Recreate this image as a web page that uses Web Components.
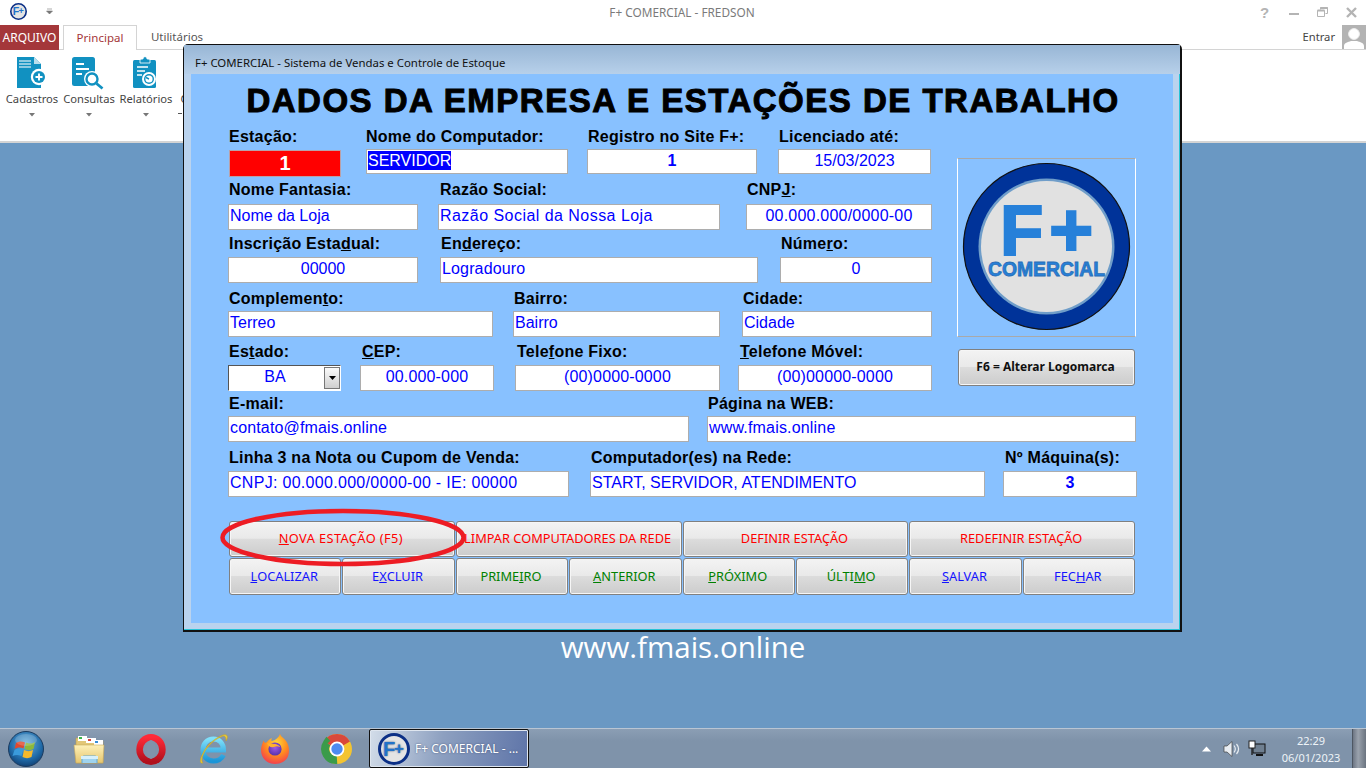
<!DOCTYPE html>
<html lang="pt-BR">
<head>
<meta charset="utf-8">
<title>F+ COMERCIAL</title>
<style>
  html, body { margin: 0; padding: 0; height: 100%; overflow: hidden; background: #6a98c3; }
</style>
</head>
<body>
<f-app>
  <f-titlebar slot="title">F+ COMERCIAL - FREDSON</f-titlebar>
  <f-ribbon slot="ribbon">
    <f-ribbon-btn icon="cadastros">Cadastros</f-ribbon-btn>
    <f-ribbon-btn icon="consultas">Consultas</f-ribbon-btn>
    <f-ribbon-btn icon="relatorios">Relatórios</f-ribbon-btn>
  </f-ribbon>
  <f-taskbar slot="taskbar"></f-taskbar>

  <f-window slot="window" caption="F+ COMERCIAL - Sistema de Vendas e Controle de Estoque">
    <f-heading>DADOS DA EMPRESA E ESTAÇÕES DE TRABALHO</f-heading>
    <f-upper>
      <f-row ly="2">
        <f-field w="112" kind="red" value="1" lx="1">Estação:</f-field>
        <f-field w="202" mx="26" up kind="selected" value="SERVIDOR">Nome do Computador:</f-field>
        <f-field w="170" mx="19" up center bold value="1" lx="1">Registro no Site F+:</f-field>
        <f-field w="153" mx="21" up center value="15/03/2023" lx="1">Licenciado até:</f-field>
      </f-row>
      <f-row mt="7" ly="0">
        <f-field w="190" value="Nome da Loja" lx="1">Nome Fantasia:</f-field>
        <f-field w="282" mx="20" ls=".46" value="Razão Social da Nossa Loja" lx="2">Razão Social:</f-field>
        <f-field w="186" mx="26" ls=".22" center value="00.000.000/0000-00" lx="1">CNP<u>J</u>:</f-field>
      </f-row>
      <f-row mt="5">
        <f-field w="190" center value="00000" lx="1">Inscrição Esta<u>d</u>ual:</f-field>
        <f-field w="318" mx="22" ls=".15" value="Logradouro" lx="1">En<u>d</u>ereço:</f-field>
        <f-field w="152" mx="22" center value="0" lx="1">Núme<u>r</u>o:</f-field>
      </f-row>
      <f-row mt="6" ly="2">
        <f-field w="265" value="Terreo" lx="1">Complemen<u>t</u>o:</f-field>
        <f-field w="207" mx="20" value="Bairro" lx="1">Bairro:</f-field>
        <f-field w="190" mx="22" value="Cidade" lx="1">Cidade:</f-field>
      </f-row>
      <f-row mt="6">
        <f-field w="113" kind="select" value="BA" lx="1">Es<u>t</u>ado:</f-field>
        <f-field w="134" mx="19" ls=".15" center value="00.000-000" lx="2"><u>C</u>EP:</f-field>
        <f-field w="205" mx="21" ls=".15" center value="(00)0000-0000" lx="2">Tele<u>f</u>one Fixo:</f-field>
        <f-field w="194" mx="18" ls=".15" center value="(00)00000-0000" lx="2"><u>T</u>elefone Móvel:</f-field>
      </f-row>
      <f-logo-box slot="side"></f-logo-box>
      <f-btn slot="side" tone="dark" strong>F6 = Alterar Logomarca</f-btn>
    </f-upper>
    <f-row mt="3" ly="2">
      <f-field w="461" ls=".15" value="contato@fmais.online" lx="1">E-mail:</f-field>
      <f-field w="429" mx="18" ls=".18" value="www.fmais.online" lx="1">Página na WEB:</f-field>
    </f-row>
    <f-row mt="7">
      <f-field w="341" ls=".3" value="CNPJ: 00.000.000/0000-00 - IE: 00000" lx="1">Linha 3 na Nota ou Cupom de Venda:</f-field>
      <f-field w="395" mx="21" value="START, SERVIDOR, ATENDIMENTO" lx="1">Computador(es) na Rede:</f-field>
      <f-field w="134" mx="18" center bold value="3" lx="2">Nº Máquina(s):</f-field>
    </f-row>
    <f-actions>
      <f-btn span="2" tone="red" style="letter-spacing:.4px"><u>N</u>OVA ESTAÇÃO (F5)</f-btn>
      <f-btn span="2" tone="red">LIMPAR COMPUTADORES DA REDE</f-btn>
      <f-btn span="2" tone="red">DEFINIR ESTAÇÃO</f-btn>
      <f-btn span="2" tone="red">REDEFINIR ESTAÇÃO</f-btn>
      <f-btn tone="blue"><u>L</u>OCALIZAR</f-btn>
      <f-btn tone="blue">E<u>X</u>CLUIR</f-btn>
      <f-btn tone="green">PRIME<u>I</u>RO</f-btn>
      <f-btn tone="green"><u>A</u>NTERIOR</f-btn>
      <f-btn tone="green"><u>P</u>RÓXIMO</f-btn>
      <f-btn tone="green">ÚLTI<u>M</u>O</f-btn>
      <f-btn tone="blue"><u>S</u>ALVAR</f-btn>
      <f-btn tone="blue">FEC<u>H</u>AR</f-btn>
      <f-mark></f-mark>
    </f-actions>
  </f-window>
</f-app>

<script>
  const FPLUS_MINI = (size) => `
    <svg width="${size}" height="${size}" viewBox="0 0 32 32">
      <circle cx="16" cy="16" r="14.5" fill="#e4e4e4" stroke="#0b2f86" stroke-width="3"/>
      <text font-family="Liberation Sans, sans-serif" font-weight="700" fill="#2272c9"><tspan x="5" y="22.5" font-size="20">F</tspan><tspan x="16" y="21" font-size="17">+</tspan></text>
    </svg>`;

  class FApp extends HTMLElement {
    constructor() {
      super();
      this.attachShadow({ mode: 'open' }).innerHTML = `
        <style>
          :host { display: flex; flex-direction: column; width: 1366px; height: 768px; position: relative; overflow: hidden;
                  font-family: "Liberation Sans", Arial, sans-serif; }
          .desk { flex: 1; background: #6a98c3; display: flex; justify-content: center; padding-top: 486px; box-sizing: border-box; }
          .site { color: #fff; font: 400 29.5px/36px "Open Sans", sans-serif; height: 36px; }
        </style>
        <slot name="title"></slot>
        <slot name="ribbon"></slot>
        <div class="desk"><span class="site">www.fmais.online</span></div>
        <slot name="taskbar"></slot>
        <slot name="window"></slot>`;
    }
  }
  customElements.define('f-app', FApp);

  class FTitlebar extends HTMLElement {
    constructor() {
      super();
      this.attachShadow({ mode: 'open' }).innerHTML = `
        <style>
          :host { display: flex; align-items: center; height: 25px; background: #fff; color: #7a7a7a;
                  font: 11.8px/25px "Noto Sans", sans-serif; }
          .left { display: flex; align-items: center; padding-left: 10px; gap: 19px; width: 116px; box-sizing: border-box; margin-top: -2px; }
          .mid { flex: 1; text-align: center; padding-right: 2px; margin-top: -1px; }
          .caret { width: 7px; height: 7px; }
          .right { display: flex; width: 116px; color: #b4b4b4; }
          .right span { width: 29px; display: flex; justify-content: center; align-items: center; height: 22px; }
          .q { font: 700 15px "Liberation Sans", sans-serif; }
        </style>
        <div class="left">${FPLUS_MINI(17)}
          <svg class="caret" viewBox="0 0 7 7"><path d="M1 1h5M0.5 3h6L3.5 6z" fill="#777" stroke="#777" stroke-width=".6"/></svg>
        </div>
        <div class="mid"><slot></slot></div>
        <div class="right">
          <span class="q">?</span>
          <span><svg width="10" height="10"><rect x="0" y="5" width="10" height="2" fill="#b4b4b4"/></svg></span>
          <span><svg width="11" height="11" fill="none" stroke="#b4b4b4"><path d="M3.5 2.5V.5h7v6h-2M.5 3.5h7v6h-7z"/><path d="M.5 3.5h7M3.5 1h7" stroke-width="2"/></svg></span>
          <span><svg width="11" height="11" stroke="#b4b4b4" stroke-width="2.4"><path d="M1 1l9 9M10 1l-9 9"/></svg></span>
        </div>`;
    }
  }
  customElements.define('f-titlebar', FTitlebar);

  class FRibbon extends HTMLElement {
    constructor() {
      super();
      this.attachShadow({ mode: 'open' }).innerHTML = `
        <style>
          :host { display: block; height: 118px; background: #fff; box-sizing: border-box; border-bottom: 2px solid #d4d4d4;
                  font: 11.5px "Noto Sans", sans-serif; color: #444; }
          .tabs { display: flex; height: 25px; box-sizing: border-box; border-bottom: 1px solid #d4d4d4; align-items: stretch; }
          .file { width: 59px; background: #a4373a; color: #fff; text-align: center; line-height: 25px; margin-bottom: -1px; font-size: 12px; }
          .tab { line-height: 24px; text-align: center; }
          .on { width: 72px; margin-left: 4px; color: #a4373a; background: #fff; border: 1px solid #d4d4d4; border-bottom: 0; margin-bottom: -1px; }
          .off { width: 78px; margin-left: 1px; color: #555; }
          .sp { flex: 1; }
          .who { line-height: 24px; margin-right: 7px; color: #444; font-size: 11.2px; }
          .ava { width: 24px; height: 24px; background: #b3b3b3; }
          .body { display: flex; padding-left: 3.5px; }
          .clip { font: 11.2px "Noto Sans", sans-serif; padding: 41px 0 0 6px; }
          .dash { width: 4px; height: 1px; background: #555; margin: 7px 0 0 -3px; }
        </style>
        <div class="tabs">
          <div class="file">ARQUIVO</div>
          <div class="tab on">Principal</div>
          <div class="tab off">Utilitários</div>
          <div class="sp"></div>
          <div class="who">Entrar</div>
          <svg class="ava" viewBox="0 0 24 24"><rect width="24" height="24" fill="#b3b3b3"/><circle cx="12" cy="9" r="5.4" fill="#fff" stroke="#eee"/><path d="M2 24v-3c0-3 4-4 7-5h6c3 1 7 2 7 5v3z" fill="#fff"/></svg>
        </div>
        <div class="body"><slot></slot><div class="clip">C<div class="dash"></div></div></div>`;
    }
  }
  customElements.define('f-ribbon', FRibbon);

  const RIBBON_ICONS = {
    cadastros: `<path d="M2 3h17l7 7v24H2z" fill="#1191c1"/><path d="M19 3l7 7h-7z" fill="#b9deec"/>
      <path d="M4 7h12M4 10h12M4 13h12" stroke="#b9deec" stroke-width="1.4"/>
      <circle cx="24" cy="23" r="8.2" fill="#fff"/><circle cx="24" cy="23" r="6" fill="#1191c1"/>
      <path d="M20.5 23h7M24 19.5v7" stroke="#fff" stroke-width="1.9"/>`,
    consultas: `<rect x="0" y="3" width="23" height="29" rx="2.5" fill="#1191c1"/>
      <path d="M4 10h8M4 15h13M4 20h6" stroke="#fff" stroke-width="2"/>
      <circle cx="20" cy="25" r="8" fill="#fff"/><circle cx="20" cy="25" r="5.5" fill="#fff" stroke="#1191c1" stroke-width="2.4"/>
      <path d="M24.5 29.5l6 5" stroke="#1191c1" stroke-width="2.8"/>`,
    relatorios: `<rect x="4" y="6" width="23" height="28" rx="1.5" fill="#1191c1"/>
      <path d="M11 6c0-1 2-1 3-1 0-3 4-3 4 0 1 0 3 0 3 1v3H11z" fill="#1191c1" stroke="#fff" stroke-width=".8"/>
      <path d="M8 13h11M8 17h8M8 21h5" stroke="#fff" stroke-width="1.5"/>
      <circle cx="20" cy="25" r="7" fill="#fff"/><circle cx="20" cy="25" r="5" fill="#1191c1"/><circle cx="20" cy="25" r="3.6" fill="#fff"/>
      <path d="M20 25l-3-1.5" stroke="#1191c1" stroke-width="1.4"/>`
  };

  class FRibbonBtn extends HTMLElement {
    connectedCallback() {
      if (this.shadowRoot) return;
      this.attachShadow({ mode: 'open' }).innerHTML = `
        <style>
          :host { display: flex; flex-direction: column; align-items: center; width: 57px; }
          svg.ic { width: 34px; height: 36px; margin-top: 4px; }
          .t { font: 11.2px/16px "Noto Sans", sans-serif; color: #444; margin-top: 1px; white-space: nowrap; }
          svg.c { width: 6px; height: 4px; margin-top: 6px; }
        </style>
        <svg class="ic" viewBox="0 0 34 36">${RIBBON_ICONS[this.getAttribute('icon')]}</svg>
        <div class="t"><slot></slot></div>
        <svg class="c" viewBox="0 0 6 4"><path d="M0 0h6L3 3.5z" fill="#777"/></svg>`;
    }
  }
  customElements.define('f-ribbon-btn', FRibbonBtn);

  class FWindow extends HTMLElement {
    connectedCallback() {
      if (this.shadowRoot) return;
      this.attachShadow({ mode: 'open' }).innerHTML = `
        <style>
          /* a window on the desktop, it floats over the ribbon */
          :host { position: absolute; left: 183px; top: 44px; width: 999px; height: 588px; box-sizing: border-box;
                  border: 1px solid #111; border-right-width: 2px; border-bottom-width: 2px; border-radius: 5px 5px 0 0;
                  display: flex; flex-direction: column; background: #bad3ee; box-shadow: inset -1px -1px 0 #27c3d6; }
          .cap { height: 29px; box-sizing: border-box; padding: 10px 0 0 11px; flex: none;
                 background: linear-gradient(#98b6d5, #b7d0ea); font: 11.4px/15px "Noto Sans", sans-serif; color: #111; }
          .client { margin: 0 7px 7px 7px; height: 549px; background: #88c1ff; padding-left: 37px; box-sizing: border-box; }
        </style>
        <div class="cap">${this.getAttribute('caption')}</div>
        <div class="client"><slot></slot></div>`;
    }
  }
  customElements.define('f-window', FWindow);

  class FHeading extends HTMLElement {
    constructor() {
      super();
      this.attachShadow({ mode: 'open' }).innerHTML = `
        <style>
          :host { display: block; height: 53px; margin-left: -35px; text-align: center; color: #000; white-space: nowrap;
                  font: 700 33px/53px "Liberation Sans", sans-serif; letter-spacing: 1.5px; -webkit-text-stroke: 1px #000; }
        </style>
        <slot></slot>`;
    }
  }
  customElements.define('f-heading', FHeading);

  class FUpper extends HTMLElement {
    constructor() {
      super();
      this.attachShadow({ mode: 'open' }).innerHTML = `
        <style>
          :host { display: flex; }
          .rows { width: 704px; }
          .side { margin-left: 25px; padding-top: 31px; display: flex; flex-direction: column; width: 179px; }
          ::slotted(f-btn) { margin: 12px 0 0 1px; width: 177px; height: 37px; }
        </style>
        <div class="rows"><slot></slot></div>
        <div class="side"><slot name="side"></slot></div>`;
    }
  }
  customElements.define('f-upper', FUpper);

  class FRow extends HTMLElement {
    connectedCallback() {
      if (this.shadowRoot) return;
      const ly = this.getAttribute('ly') || 1;
      this.attachShadow({ mode: 'open' }).innerHTML = `
        <style>:host { display: flex; margin-top: ${this.getAttribute('mt') || 0}px; --ly: ${ly}px; }</style>
        <slot></slot>`;
    }
  }
  customElements.define('f-row', FRow);

  class FField extends HTMLElement {
    connectedCallback() {
      if (this.shadowRoot) return;
      const kind = this.getAttribute('kind') || '';
      const value = this.getAttribute('value') || '';
      let inner = `<span class="v">${value}</span>`;
      if (kind === 'select') {
        inner = `<span class="v">${value}</span><span class="drop"><svg width="7" height="4"><path d="M0 0h7L3.5 4z" fill="#000"/></svg></span>`;
      }
      this.attachShadow({ mode: 'open' }).innerHTML = `
        <style>
          :host { display: block; width: ${this.getAttribute('w')}px; margin-left: ${this.getAttribute('mx') || 0}px; flex: none; }
          .lab { height: 22px; font: 700 16px/16px "Liberation Sans", sans-serif; color: #000; letter-spacing: .24px;
                 padding: var(--ly, 1px) 0 0 ${this.getAttribute('lx') || 0}px; white-space: nowrap; box-sizing: border-box; }
          .box { height: 26px; box-sizing: border-box; background: #fff; border: 1px solid #adadad; color: #0000ff;
                 font: 16px/22px "Liberation Sans", sans-serif; padding: 0 1px; white-space: nowrap; overflow: hidden;
                 letter-spacing: ${this.getAttribute('ls') || 0}px; }
          :host([center]) .box { text-align: center; }
          :host([bold]) .box { font-weight: 700; }
          :host([up]) .box { height: 25px; }
          .selected .v { background: #0000ff; color: #fff; display: inline-block; line-height: 19px; margin-top: 1px; }
          .red { background: #f00; border-color: #b9a0a8; color: #fff; font-weight: 700; font-size: 20px; text-align: center; height: 27px; margin: 1px -1px -2px 1px; line-height: 25px; }
          .select { position: relative; background: #fff; border: 1px solid #fff; border-top-color: #555; border-left-color: #555; padding-right: 20px; text-align: center; }
          /* the small arrow of the combo lies over the box */
          .drop { position: absolute; right: 0; top: 1px; width: 16px; height: 22px; box-sizing: border-box; border: 1px solid #777;
                  background: linear-gradient(#fafafa, #cfcfcf); display: flex; align-items: center; justify-content: center; }
        </style>
        <div class="lab"><slot></slot></div>
        <div class="box ${kind}">${inner}</div>`;
    }
  }
  customElements.define('f-field', FField);

  class FLogoBox extends HTMLElement {
    constructor() {
      super();
      this.attachShadow({ mode: 'open' }).innerHTML = `
        <style>
          :host { display: block; width: 179px; height: 179px; box-sizing: border-box; border: 1px solid; border-color: #a9a9a9 #fff #a9a9a9 #fff; }
          svg { display: block; }
        </style>
        <svg width="177" height="177" viewBox="0 0 177 177">
          <circle cx="88.5" cy="87.5" r="83" fill="#003399" stroke="#111" stroke-width="1.2"/>
          <circle cx="88.5" cy="87.5" r="68" fill="#6f9dc9"/>
          <circle cx="88.5" cy="87.5" r="65.5" fill="#e1e1e1"/>
          <text font-family="Liberation Sans, sans-serif" font-weight="700" fill="#2680d9" stroke="#2680d9" stroke-width="2">
            <tspan x="42" y="96" font-size="71">F</tspan><tspan x="91" y="96.5" font-size="76">+</tspan>
          </text>
          <text x="30" y="117" font-family="Liberation Sans, sans-serif" font-weight="700" font-size="20" textLength="117" lengthAdjust="spacingAndGlyphs" fill="#2680d9" stroke="#2a6fb8" stroke-width=".8">COMERCIAL</text>
        </svg>`;
    }
  }
  customElements.define('f-logo-box', FLogoBox);

  class FBtn extends HTMLElement {
    connectedCallback() {
      if (this.shadowRoot) return;
      const tones = { red: '#ff0000', blue: '#1414ff', green: '#008000', dark: '#111' };
      const span = this.getAttribute('span') || 1;
      this.attachShadow({ mode: 'open' }).innerHTML = `
        <style>
          :host { display: flex; align-items: center; justify-content: center; box-sizing: border-box; grid-column: span ${span};
                  border: 1px solid #808080; border-radius: 3px; box-shadow: inset 0 0 0 1px #f6f6f6; padding: 0 2px 2px 0;
                  background: linear-gradient(#f3f3f3, #e9e9e9 48%, #dcdcdc 50%, #cccccc);
                  color: ${tones[this.getAttribute('tone')]}; font: 12.8px/16px "Noto Sans", sans-serif; white-space: nowrap; }
          :host([strong]) { font-weight: 700; font-size: 12px; }
        </style>
        <slot></slot>`;
    }
  }
  customElements.define('f-btn', FBtn);

  class FActions extends HTMLElement {
    constructor() {
      super();
      this.attachShadow({ mode: 'open' }).innerHTML = `
        <style>
          :host { display: grid; position: relative; width: 906px; margin: 24px 0 0 1px; grid-template-columns: repeat(8, 1fr);
                  grid-template-rows: 36px 37px; column-gap: 1px; row-gap: 1px; }
        </style>
        <slot></slot>`;
    }
  }
  customElements.define('f-actions', FActions);

  class FMark extends HTMLElement {
    constructor() {
      super();
      this.attachShadow({ mode: 'open' }).innerHTML = `
        <style>
          /* hand drawn ring that lies over the button */
          :host { position: absolute; left: -10px; top: -13px; width: 248px; height: 60px; pointer-events: none; }
        </style>
        <svg width="248" height="60"><ellipse cx="124" cy="29.5" rx="120.5" ry="26.5" fill="none" stroke="#ed1c24" stroke-width="4.5"/></svg>`;
    }
  }
  customElements.define('f-mark', FMark);

  const TASK_ICONS = [
    `<defs><linearGradient id="fo" x1="0" y1="0" x2="0" y2="1"><stop offset="0" stop-color="#fdf0b8"/><stop offset="1" stop-color="#e6c66e"/></linearGradient></defs>
     <path d="M3 5h11l2 3h14v22H3z" fill="#e2c676" stroke="#b89a50" stroke-width=".6"/>
     <rect x="5" y="3" width="9" height="5" fill="#fff"/><rect x="6" y="4" width="3" height="2" fill="#38b54a"/>
     <rect x="13" y="5" width="10" height="5" fill="#fff"/><rect x="15" y="6" width="3" height="2" fill="#d8443c"/>
     <rect x="21" y="7" width="9" height="5" fill="#fff"/><rect x="22" y="8" width="3" height="2" fill="#3a8fd8"/>
     <path d="M1 12h30l-1 18H3z" fill="url(#fo)" stroke="#c8a85c" stroke-width=".6"/>
     <path d="M9 30v-5c0-1 1-2 2-2h11c1 0 2 1 2 2v5" fill="#9fd3ee" stroke="#5fa8d6"/>
     <rect x="8" y="23" width="17" height="3" fill="#d6f0fb"/>`,
    `<defs><linearGradient id="op" x1="0" y1="0" x2="0" y2="1"><stop offset="0" stop-color="#ff2a38"/><stop offset="1" stop-color="#b0101c"/></linearGradient></defs>
     <ellipse cx="16" cy="16.5" rx="11.4" ry="12.2" fill="none" stroke="url(#op)" stroke-width="6.6"/>
     <ellipse cx="16" cy="16.5" rx="4.6" ry="9.6" fill="#8094ab"/>`,
    `<defs><linearGradient id="ie" x1="0" y1="0" x2="0" y2="1"><stop offset="0" stop-color="#7fe0fa"/><stop offset="1" stop-color="#1a95d8"/></linearGradient></defs>
     <path d="M7.5 17h19c0-7-4.5-11-10-11C10 6 6 11 6 17s4 11 10.500 11c4.500 0 8-2 10-6" fill="none" stroke="url(#ie)" stroke-width="5"/>
     <path d="M6 30c-4 1-3-4 0-10C10 11 20 4 26 2c4-1 6 1 3 6 0-4-1-5-3-5C18 6 11 12 7 20c-2 4-3 8-1 10z" fill="#e9c93a" stroke="#c7a21c" stroke-width=".5"/>`,
    `<defs><radialGradient id="ffa" cx=".55" cy=".3" r=".8"><stop offset="0" stop-color="#ffd83a"/><stop offset=".5" stop-color="#ff8a1f"/><stop offset="1" stop-color="#f02a5c"/></radialGradient>
       <radialGradient id="ffb" cx=".5" cy=".4" r=".7"><stop offset="0" stop-color="#a05ae6"/><stop offset="1" stop-color="#4c2ba0"/></radialGradient></defs>
     <path d="M21 1c1 3 4 4 6 7 3 4 3 8 3 10 0 8-6 13-14 13S2 25 2 17c0-3 1-6 2-8 1-2 1-1 1 0 1 1 2 1 3 0 1-2 3-3 5-4-1 2-1 3 0 3 4-1 7-4 8-7z" fill="url(#ffa)"/>
     <circle cx="16" cy="16" r="6.600" fill="url(#ffb)"/>
     <path d="M8 10c2 1 4 0 7 1 3 0 6 2 6 3-2-1-4-1-6 0-3 1-5 0-7-4z" fill="#ffb22e"/>`,
    `<circle cx="16" cy="16" r="11" fill="none" stroke="#f4c430" stroke-width="8"/>
     <path d="M6.500 10.500A11 11 0 0 1 25.500 10.500" fill="none" stroke="#d9483b" stroke-width="8"/>
     <path d="M6.500 10.500L6 10A11 11 0 0 0 16 27" fill="none" stroke="#3a9b4a" stroke-width="8"/>
     <circle cx="16" cy="16" r="7.400" fill="#fff"/><circle cx="16" cy="16" r="5.700" fill="#4d8bf0"/>`
  ];

  class FTaskbar extends HTMLElement {
    constructor() {
      super();
      const icons = TASK_ICONS.map(i => `<div class="ti"><svg width="32" height="32" viewBox="0 0 32 32">${i}</svg></div>`).join('');
      this.attachShadow({ mode: 'open' }).innerHTML = `
        <style>
          :host { display: flex; height: 40px; background: linear-gradient(#8b9eb4, #7f93aa 30%); border-top: 1px solid #b9c5d3;
                  box-sizing: border-box; font: 12px/16px "Noto Sans", sans-serif; color: #fff; align-items: stretch; }
          .start { width: 58px; display: flex; align-items: center; padding-left: 8px; box-sizing: border-box; }
          .ti { width: 62px; display: flex; align-items: center; justify-content: center; }
          .task { width: 160px; margin-left: 1px; box-sizing: border-box; border: 1px solid #111; border-radius: 2px;
                  box-shadow: inset 0 0 0 1px #dfe6ef; background: linear-gradient(100deg, #d3dde9, #8da0c0 45%, #5e74a8);
                  display: flex; align-items: center; gap: 5px; padding-left: 8px; text-shadow: 0 0 2px #44557a; white-space: nowrap; }
          .sp { flex: 1; }
          .tray { display: flex; align-items: center; }
          .clock { width: 82px; text-align: center; color: #eef3f8; line-height: 17px; margin-left: 4px; font-size: 11px; }
          .show { width: 14px; background: linear-gradient(90deg, #6d7684, #9aa2ad 40%, #6b7480); border-left: 1px solid #4e5763; box-sizing: border-box; }
        </style>
        <div class="start">
          <svg width="36" height="36" viewBox="0 0 36 36">
            <defs><radialGradient id="orb" cx=".5" cy=".35" r=".75"><stop offset="0" stop-color="#6fb4e0"/><stop offset=".6" stop-color="#1f6aa8"/><stop offset="1" stop-color="#0c2f5c"/></radialGradient></defs>
            <circle cx="18" cy="18" r="17.500" fill="url(#orb)" stroke="#1c3b5e"/>
            <path d="M8 12c3-2 6-2 9-.5l-1.500 6c-3-1.500-6-1.500-9 .5z" fill="#e0492e"/>
            <path d="M18 11.500c3 1.500 6 1.500 9-.5l-1.500 7c-3 1.500-6 1.500-9 0z" fill="#8cb83c"/>
            <path d="M6.500 19c3-2 6-2 8.500-.5l-1.500 6.500c-3-1.500-6-1.500-9 0z" fill="#3a9bdc"/>
            <path d="M16 19c3 1.500 6 1.500 9 0l-1.500 7c-3 1.500-6 1.500-9 0z" fill="#f6b92c"/>
            <ellipse cx="18" cy="9" rx="11" ry="6" fill="#fff" opacity=".18"/>
          </svg>
        </div>
        ${icons}
        <div class="task">${FPLUS_MINI(32)}<span>F+ COMERCIAL - ...</span></div>
        <div class="sp"></div>
        <div class="tray">
          <svg width="12" height="8" style="margin-right:10px"><path d="M1 6.500h9L5.500 1.500z" fill="#fff"/></svg>
          <svg width="18" height="18" style="margin-right:7px"><path d="M1 6h3l5-4.500v15L4 12H1z" fill="#e8edf2" stroke="#444" stroke-width=".7"/><path d="M11 5.500c1.500 2 1.500 5 0 7M13.500 4c2.500 3 2.500 7 0 10" fill="none" stroke="#e8edf2" stroke-width="1.200"/></svg>
          <svg width="18" height="18"><rect x="5" y="4" width="12" height="9" fill="#6f7f90" stroke="#111"/><path d="M8 15h7" stroke="#111" stroke-width="2"/><rect x="1" y="1" width="6" height="7" fill="#fff" stroke="#222"/><path d="M4 8v7" stroke="#222" stroke-width="1.400"/></svg>
          <div class="clock">22:29<br>06/01/2023</div>
        </div>
        <div class="show"></div>`;
    }
  }
  customElements.define('f-taskbar', FTaskbar);
</script>
</body>
</html>
